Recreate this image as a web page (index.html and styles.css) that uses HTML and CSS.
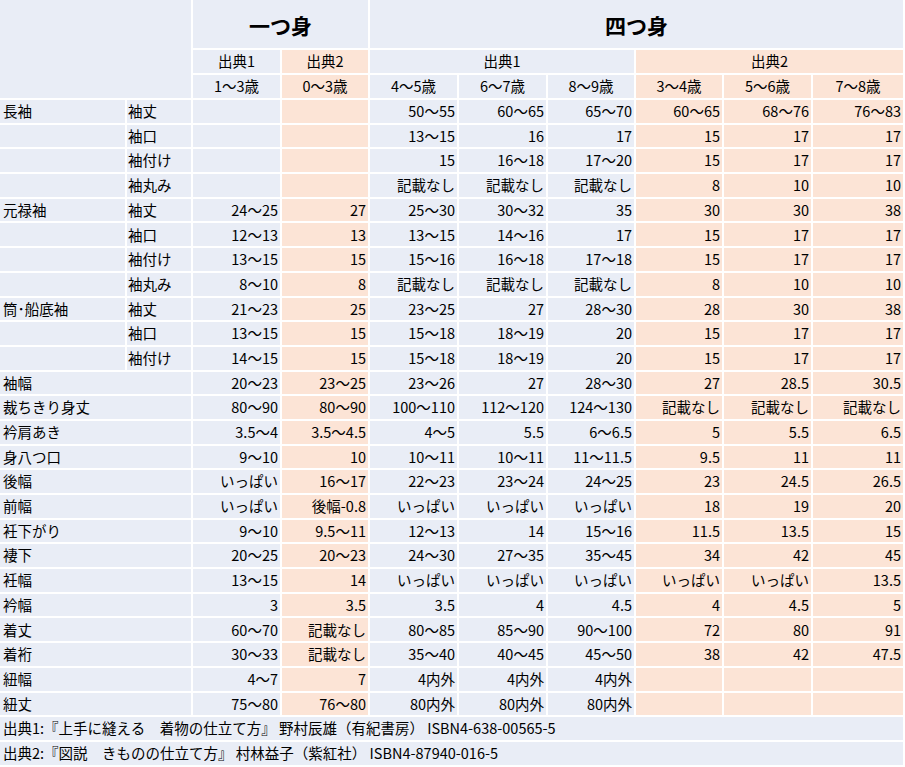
FILE: index.html
```html
<!DOCTYPE html>
<html lang="ja">
<head>
<meta charset="utf-8">
<title>一つ身・四つ身 寸法表</title>
<link rel="stylesheet" href="styles.css">
</head>
<body>
<div class="sheet">
  <div class="cell corner"></div>
  <div class="cell title span2">一つ身</div>
  <div class="cell title span6">四つ身</div>

  <div class="cell head">出典1</div>
  <div class="cell head pe">出典2</div>
  <div class="cell head span3">出典1</div>
  <div class="cell head pe span3">出典2</div>

  <div class="cell head">1～3歳</div>
  <div class="cell head pe">0～3歳</div>
  <div class="cell head">4～5歳</div>
  <div class="cell head">6～7歳</div>
  <div class="cell head">8～9歳</div>
  <div class="cell head pe">3～4歳</div>
  <div class="cell head pe">5～6歳</div>
  <div class="cell head pe">7～8歳</div>

  <!-- 長袖 -->
  <div class="cell lab">長袖</div><div class="cell lab sub">袖丈</div>
  <div class="cell num"></div><div class="cell num pe"></div>
  <div class="cell num">50～55</div><div class="cell num">60～65</div><div class="cell num">65～70</div>
  <div class="cell num pe">60～65</div><div class="cell num pe">68～76</div><div class="cell num pe">76～83</div>

  <div class="cell lab"></div><div class="cell lab sub">袖口</div>
  <div class="cell num"></div><div class="cell num pe"></div>
  <div class="cell num">13～15</div><div class="cell num">16</div><div class="cell num">17</div>
  <div class="cell num pe">15</div><div class="cell num pe">17</div><div class="cell num pe">17</div>

  <div class="cell lab"></div><div class="cell lab sub">袖付け</div>
  <div class="cell num"></div><div class="cell num pe"></div>
  <div class="cell num">15</div><div class="cell num">16～18</div><div class="cell num">17～20</div>
  <div class="cell num pe">15</div><div class="cell num pe">17</div><div class="cell num pe">17</div>

  <div class="cell lab"></div><div class="cell lab sub">袖丸み</div>
  <div class="cell num"></div><div class="cell num pe"></div>
  <div class="cell num">記載なし</div><div class="cell num">記載なし</div><div class="cell num">記載なし</div>
  <div class="cell num pe">8</div><div class="cell num pe">10</div><div class="cell num pe">10</div>

  <!-- 元禄袖 -->
  <div class="cell lab">元禄袖</div><div class="cell lab sub">袖丈</div>
  <div class="cell num">24～25</div><div class="cell num pe">27</div>
  <div class="cell num">25～30</div><div class="cell num">30～32</div><div class="cell num">35</div>
  <div class="cell num pe">30</div><div class="cell num pe">30</div><div class="cell num pe">38</div>

  <div class="cell lab"></div><div class="cell lab sub">袖口</div>
  <div class="cell num">12～13</div><div class="cell num pe">13</div>
  <div class="cell num">13～15</div><div class="cell num">14～16</div><div class="cell num">17</div>
  <div class="cell num pe">15</div><div class="cell num pe">17</div><div class="cell num pe">17</div>

  <div class="cell lab"></div><div class="cell lab sub">袖付け</div>
  <div class="cell num">13～15</div><div class="cell num pe">15</div>
  <div class="cell num">15～16</div><div class="cell num">16～18</div><div class="cell num">17～18</div>
  <div class="cell num pe">15</div><div class="cell num pe">17</div><div class="cell num pe">17</div>

  <div class="cell lab"></div><div class="cell lab sub">袖丸み</div>
  <div class="cell num">8～10</div><div class="cell num pe">8</div>
  <div class="cell num">記載なし</div><div class="cell num">記載なし</div><div class="cell num">記載なし</div>
  <div class="cell num pe">8</div><div class="cell num pe">10</div><div class="cell num pe">10</div>

  <!-- 筒・船底袖 -->
  <div class="cell lab">筒･船底袖</div><div class="cell lab sub">袖丈</div>
  <div class="cell num">21～23</div><div class="cell num pe">25</div>
  <div class="cell num">23～25</div><div class="cell num">27</div><div class="cell num">28～30</div>
  <div class="cell num pe">28</div><div class="cell num pe">30</div><div class="cell num pe">38</div>

  <div class="cell lab"></div><div class="cell lab sub">袖口</div>
  <div class="cell num">13～15</div><div class="cell num pe">15</div>
  <div class="cell num">15～18</div><div class="cell num">18～19</div><div class="cell num">20</div>
  <div class="cell num pe">15</div><div class="cell num pe">17</div><div class="cell num pe">17</div>

  <div class="cell lab"></div><div class="cell lab sub">袖付け</div>
  <div class="cell num">14～15</div><div class="cell num pe">15</div>
  <div class="cell num">15～18</div><div class="cell num">18～19</div><div class="cell num">20</div>
  <div class="cell num pe">15</div><div class="cell num pe">17</div><div class="cell num pe">17</div>

  <!-- single rows -->
  <div class="cell lab wide">袖幅</div>
  <div class="cell num">20～23</div><div class="cell num pe">23～25</div>
  <div class="cell num">23～26</div><div class="cell num">27</div><div class="cell num">28～30</div>
  <div class="cell num pe">27</div><div class="cell num pe">28.5</div><div class="cell num pe">30.5</div>

  <div class="cell lab wide">裁ちきり身丈</div>
  <div class="cell num">80～90</div><div class="cell num pe">80～90</div>
  <div class="cell num">100～110</div><div class="cell num">112～120</div><div class="cell num">124～130</div>
  <div class="cell num pe">記載なし</div><div class="cell num pe">記載なし</div><div class="cell num pe">記載なし</div>

  <div class="cell lab wide">衿肩あき</div>
  <div class="cell num">3.5～4</div><div class="cell num pe">3.5～4.5</div>
  <div class="cell num">4～5</div><div class="cell num">5.5</div><div class="cell num">6～6.5</div>
  <div class="cell num pe">5</div><div class="cell num pe">5.5</div><div class="cell num pe">6.5</div>

  <div class="cell lab wide">身八つ口</div>
  <div class="cell num">9～10</div><div class="cell num pe">10</div>
  <div class="cell num">10～11</div><div class="cell num">10～11</div><div class="cell num">11～11.5</div>
  <div class="cell num pe">9.5</div><div class="cell num pe">11</div><div class="cell num pe">11</div>

  <div class="cell lab wide">後幅</div>
  <div class="cell num">いっぱい</div><div class="cell num pe">16～17</div>
  <div class="cell num">22～23</div><div class="cell num">23～24</div><div class="cell num">24～25</div>
  <div class="cell num pe">23</div><div class="cell num pe">24.5</div><div class="cell num pe">26.5</div>

  <div class="cell lab wide">前幅</div>
  <div class="cell num">いっぱい</div><div class="cell num pe">後幅-0.8</div>
  <div class="cell num">いっぱい</div><div class="cell num">いっぱい</div><div class="cell num">いっぱい</div>
  <div class="cell num pe">18</div><div class="cell num pe">19</div><div class="cell num pe">20</div>

  <div class="cell lab wide">衽下がり</div>
  <div class="cell num">9～10</div><div class="cell num pe">9.5～11</div>
  <div class="cell num">12～13</div><div class="cell num">14</div><div class="cell num">15～16</div>
  <div class="cell num pe">11.5</div><div class="cell num pe">13.5</div><div class="cell num pe">15</div>

  <div class="cell lab wide">褄下</div>
  <div class="cell num">20～25</div><div class="cell num pe">20～23</div>
  <div class="cell num">24～30</div><div class="cell num">27～35</div><div class="cell num">35～45</div>
  <div class="cell num pe">34</div><div class="cell num pe">42</div><div class="cell num pe">45</div>

  <div class="cell lab wide">衽幅</div>
  <div class="cell num">13～15</div><div class="cell num pe">14</div>
  <div class="cell num">いっぱい</div><div class="cell num">いっぱい</div><div class="cell num">いっぱい</div>
  <div class="cell num pe">いっぱい</div><div class="cell num pe">いっぱい</div><div class="cell num pe">13.5</div>

  <div class="cell lab wide">衿幅</div>
  <div class="cell num">3</div><div class="cell num pe">3.5</div>
  <div class="cell num">3.5</div><div class="cell num">4</div><div class="cell num">4.5</div>
  <div class="cell num pe">4</div><div class="cell num pe">4.5</div><div class="cell num pe">5</div>

  <div class="cell lab wide">着丈</div>
  <div class="cell num">60～70</div><div class="cell num pe">記載なし</div>
  <div class="cell num">80～85</div><div class="cell num">85～90</div><div class="cell num">90～100</div>
  <div class="cell num pe">72</div><div class="cell num pe">80</div><div class="cell num pe">91</div>

  <div class="cell lab wide">着裄</div>
  <div class="cell num">30～33</div><div class="cell num pe">記載なし</div>
  <div class="cell num">35～40</div><div class="cell num">40～45</div><div class="cell num">45～50</div>
  <div class="cell num pe">38</div><div class="cell num pe">42</div><div class="cell num pe">47.5</div>

  <div class="cell lab wide">紐幅</div>
  <div class="cell num">4～7</div><div class="cell num pe">7</div>
  <div class="cell num">4内外</div><div class="cell num">4内外</div><div class="cell num">4内外</div>
  <div class="cell num pe"></div><div class="cell num pe"></div><div class="cell num pe"></div>

  <div class="cell lab wide">紐丈</div>
  <div class="cell num">75～80</div><div class="cell num pe">76～80</div>
  <div class="cell num">80内外</div><div class="cell num">80内外</div><div class="cell num">80内外</div>
  <div class="cell num pe"></div><div class="cell num pe"></div><div class="cell num pe"></div>

  <div class="cell note">出典1:『上手に縫える　着物の仕立て方』 野村辰雄（有紀書房） ISBN4-638-00565-5</div>
  <div class="cell note">出典2:『図説　きものの仕立て方』 村林益子（紫紅社） ISBN4-87940-016-5</div>
</div>
</body>
</html>
```

FILE: styles.css
```css
html, body {
  margin: 0;
  padding: 0;
  background: #ffffff;
}

body {
  font-family: "Noto Sans CJK JP", "Noto Sans", sans-serif;
  font-size: 14.5px;
  color: #000000;
}

.sheet {
  display: grid;
  grid-template-columns: 125px 64px 87px 86px 87px 87px 86px 86px 87px 90px;
  grid-template-rows: 48px 23px 23px;
  grid-auto-rows: 22.7px;
  gap: 2px;
  width: 903px;
}

.cell {
  background: #e9edf6;
  display: flex;
  align-items: center;
  white-space: nowrap;
  overflow: hidden;
  line-height: 1;
}

.pe {
  background: #fce4d6;
}

.corner {
  grid-row: 1 / 4;
  grid-column: 1 / 3;
}

.span2 { grid-column: span 2; }
.span3 { grid-column: span 3; }
.span6 { grid-column: span 6; }

.title {
  justify-content: center;
  font-size: 21px;
  font-weight: bold;
  padding-top: 3px;
}

.head {
  justify-content: center;
}

.lab {
  padding-left: 3px;
}

.sub {
  padding-left: 1px;
}

.wide {
  grid-column: span 2;
}

.num {
  justify-content: flex-end;
  padding-right: 2px;
}

.note {
  grid-column: 1 / -1;
  padding-left: 3px;
}
```
